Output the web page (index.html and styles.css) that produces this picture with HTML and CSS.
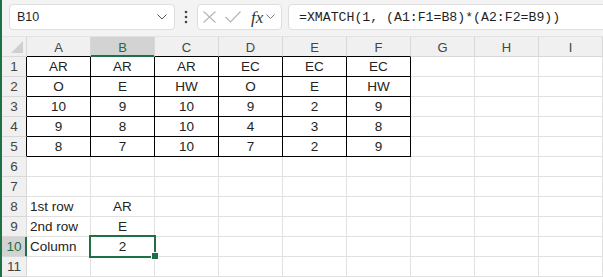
FILE: index.html
```html
<!DOCTYPE html>
<html lang="en">
<head>
    <meta charset="UTF-8">
    <meta name="viewport" content="width=device-width, initial-scale=1.0">
    <link rel="stylesheet" href="styles.css">
    <title>XMATCH two criteria</title>
</head>
<body>
    <div class="app">
        <div class="edge"></div>
        <div class="main">

            <!-- formula bar -->
            <div class="fbar">
                <div class="namebox">
                    <span>B10</span>
                    <svg width="10" height="6" viewBox="0 0 10 6"><polyline points="0.5,0.5 5,5 9.5,0.5" fill="none" stroke="#555" stroke-width="1"/></svg>
                </div>
                <div class="dots">
                    <svg width="4" height="14" viewBox="0 0 4 14"><circle cx="2" cy="2" r="1.3" fill="#444"/><circle cx="2" cy="7" r="1.3" fill="#444"/><circle cx="2" cy="12" r="1.3" fill="#444"/></svg>
                </div>
                <div class="fxbox">
                    <svg class="ico" width="13" height="12" viewBox="0 0 13 12"><path d="M0.5 0.5 L12.5 11.5 M12.5 0.5 L0.5 11.5" stroke="#b4b4b4" stroke-width="1.1" fill="none"/></svg>
                    <svg class="ico" width="16" height="12" viewBox="0 0 16 12"><polyline points="0.5,6 5.5,11 15.5,0.5" stroke="#b4b4b4" stroke-width="1.1" fill="none"/></svg>
                    <span class="fx">fx</span>
                    <svg width="9" height="6" viewBox="0 0 9 6"><polyline points="0.5,0.5 4.5,4.5 8.5,0.5" fill="none" stroke="#777" stroke-width="1"/></svg>
                </div>
                <div class="formula">=XMATCH(1, (A1:F1=B8)*(A2:F2=B9))</div>
            </div>

            <!-- grid -->
            <div class="sheet">
                <div class="row head">
                    <div class="corner"><svg width="12" height="12" viewBox="0 0 12 12"><polygon points="12,0 12,12 0,12" fill="#cfcfcf"/></svg></div>
                    <div class="ch tb">A</div>
                    <div class="ch tb on">B</div>
                    <div class="ch tb">C</div>
                    <div class="ch tb">D</div>
                    <div class="ch tb">E</div>
                    <div class="ch tb">F</div>
                    <div class="ch">G</div>
                    <div class="ch">H</div>
                    <div class="ch">I</div>
                </div>

                <div class="row">
                    <div class="rh tb">1</div>
                    <div class="c t">AR</div><div class="c t">AR</div><div class="c t">AR</div>
                    <div class="c t">EC</div><div class="c t">EC</div><div class="c t">EC</div>
                    <div class="c"></div><div class="c"></div><div class="c"></div>
                </div>
                <div class="row">
                    <div class="rh tb">2</div>
                    <div class="c t">O</div><div class="c t">E</div><div class="c t">HW</div>
                    <div class="c t">O</div><div class="c t">E</div><div class="c t">HW</div>
                    <div class="c"></div><div class="c"></div><div class="c"></div>
                </div>
                <div class="row">
                    <div class="rh tb">3</div>
                    <div class="c t">10</div><div class="c t">9</div><div class="c t">10</div>
                    <div class="c t">9</div><div class="c t">2</div><div class="c t">9</div>
                    <div class="c"></div><div class="c"></div><div class="c"></div>
                </div>
                <div class="row">
                    <div class="rh tb">4</div>
                    <div class="c t">9</div><div class="c t">8</div><div class="c t">10</div>
                    <div class="c t">4</div><div class="c t">3</div><div class="c t">8</div>
                    <div class="c"></div><div class="c"></div><div class="c"></div>
                </div>
                <div class="row">
                    <div class="rh tb">5</div>
                    <div class="c t">8</div><div class="c t">7</div><div class="c t">10</div>
                    <div class="c t">7</div><div class="c t">2</div><div class="c t">9</div>
                    <div class="c"></div><div class="c"></div><div class="c"></div>
                </div>
                <div class="row">
                    <div class="rh">6</div>
                    <div class="c"></div><div class="c"></div><div class="c"></div><div class="c"></div><div class="c"></div>
                    <div class="c"></div><div class="c"></div><div class="c"></div><div class="c"></div>
                </div>
                <div class="row">
                    <div class="rh">7</div>
                    <div class="c"></div><div class="c"></div><div class="c"></div><div class="c"></div><div class="c"></div>
                    <div class="c"></div><div class="c"></div><div class="c"></div><div class="c"></div>
                </div>
                <div class="row">
                    <div class="rh">8</div>
                    <div class="c left">1st row</div><div class="c">AR</div>
                    <div class="c"></div><div class="c"></div><div class="c"></div>
                    <div class="c"></div><div class="c"></div><div class="c"></div><div class="c"></div>
                </div>
                <div class="row">
                    <div class="rh">9</div>
                    <div class="c left">2nd row</div><div class="c">E</div>
                    <div class="c"></div><div class="c"></div><div class="c"></div>
                    <div class="c"></div><div class="c"></div><div class="c"></div><div class="c"></div>
                </div>
                <div class="row">
                    <div class="rh on">10</div>
                    <div class="c left">Column</div><div class="c sel">2</div>
                    <div class="c"></div><div class="c"></div><div class="c"></div>
                    <div class="c"></div><div class="c"></div><div class="c"></div><div class="c"></div>
                </div>
                <div class="row">
                    <div class="rh">11</div>
                    <div class="c"></div><div class="c"></div><div class="c"></div><div class="c"></div><div class="c"></div>
                    <div class="c"></div><div class="c"></div><div class="c"></div><div class="c"></div>
                </div>
            </div>
        </div>
    </div>
</body>
</html>
```

FILE: styles.css
```css
*{box-sizing: border-box; margin: 0; padding: 0;}

body{width: 603px; height: 277px; overflow: hidden; background: #fff; font-family: "Liberation Sans", Arial, sans-serif; color: #222;}

.app{display: flex; height: 277px;}
.edge{width: 2px; flex: none; background: #1e7145;}
.main{flex: 1; min-width: 0; overflow: hidden;}

/* formula bar */
.fbar{height: 37px; display: flex; align-items: flex-start; padding: 4px 0 0 7px; background: #f3f3f3; border-bottom: 1px solid #e2e2e2;}
.namebox{width: 166px; height: 26px; flex: none; display: flex; align-items: center; justify-content: space-between; padding: 0 7px 0 7px; background: #fff; border: 1px solid #dedede; border-radius: 4px; font-size: 12.5px; color: #1f1f1f;}
.dots{width: 22px; height: 26px; flex: none; display: flex; align-items: center; justify-content: center;}
.fxbox{width: 85px; height: 26px; flex: none; display: flex; align-items: center; padding-left: 5px; background: #fff; border: 1px solid #dedede; border-radius: 4px;}
.fxbox .ico{margin-right: 9px;}
.fxbox .ico + .ico{margin-right: 10px;}
.fx{font-family: "Liberation Serif", serif; font-style: italic; font-size: 17px; color: #333; margin-right: 3px; line-height: 1;}
.formula{flex: 1; height: 26px; margin-left: 6px; margin-right: -6px; display: flex; align-items: center; padding-left: 10px; background: #fff; border: 1px solid #dedede; border-radius: 4px; font-family: "Liberation Mono", monospace; font-size: 13.2px; color: #1f1f1f; white-space: nowrap;}

/* sheet */
.row{display: grid; grid-template-columns: 25px repeat(9, 64px); height: 20px;}
.row > div{border-right: 1px solid #e1e1e1; border-bottom: 1px solid #e1e1e1; display: flex; align-items: flex-end; justify-content: center; padding-bottom: 2px; font-size: 13.5px; white-space: nowrap;}

.head > div{background: #f0f0f0; border-right-color: #d8d8d8; border-bottom-color: #d8d8d8; color: #444; font-size: 13px; padding-bottom: 1px;}
.head .corner{align-items: flex-end; justify-content: flex-end; padding: 0 3px 3px 0;}
.ch.tb{border-bottom-color: #000;}
.ch.on{background: #d3d3d3; color: #1e6e43; border-bottom-color: #1e7145; box-shadow: inset 0 -1px 0 #1e7145;}

.rh{background: #f0f0f0; color: #444; font-size: 13px; border-bottom-color: #d8d8d8 !important; border-right-color: #d8d8d8 !important;}
.rh.tb{border-right-color: #000 !important;}
.rh.on{background: #d3d3d3; color: #1e6e43; border-right-color: #1e7145 !important; box-shadow: inset -1px 0 0 #1e7145;}

.c.t{border-right-color: #000; border-bottom-color: #000;}
.c.left{justify-content: flex-start; padding-left: 3px;}

.sel{position: relative;}
.sel::after{content: ""; position: absolute; top: -2px; left: -2px; right: -2px; bottom: -2px; border: 2px solid #1e7145;}
.sel::before{content: ""; position: absolute; right: -4px; bottom: -3px; width: 6px; height: 6px; background: #1e7145; outline: 1px solid #fff; z-index: 1;}
```
